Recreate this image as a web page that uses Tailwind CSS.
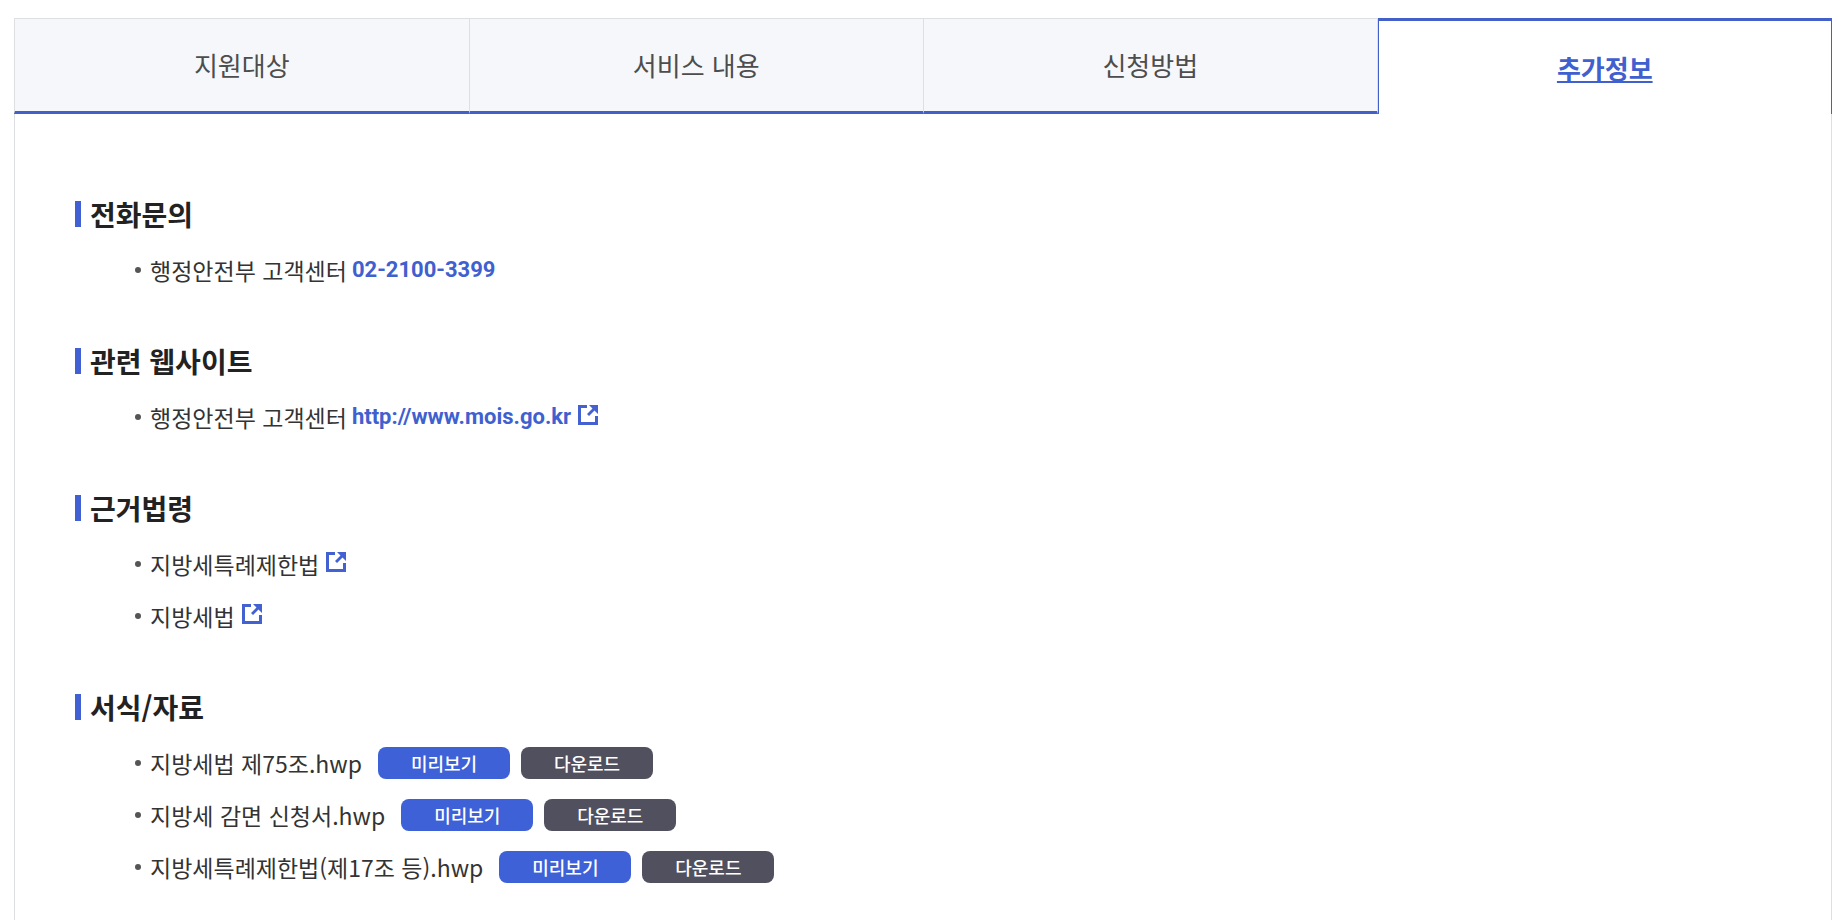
<!DOCTYPE html>
<html lang="ko">
<head>
<meta charset="utf-8">
<meta name="viewport" content="width=device-width, initial-scale=1">
<title>추가정보</title>
<script src="https://cdn.jsdelivr.net/npm/@tailwindcss/browser@4"></script>
</head>
<body class="bg-white font-['Noto_Sans_CJK_KR',sans-serif] text-[#333]">
<svg class="hidden" aria-hidden="true">
  <symbol id="external" viewBox="0 0 20 20">
    <path d="M9 1.500H1.500v17h17V11" fill="none" stroke="#4361d0" stroke-width="3"/>
    <path d="M11 0h9v9l-3.500-3.500L11 11 9 9l5.500-5.500z" fill="#4361d0"/>
  </symbol>
</svg>
<main class="mx-[14px] mt-[18px] flex min-h-[calc(100vh-18px)] flex-col">
  <div role="tablist" class="grid h-24 grid-cols-4 text-[26px] leading-[38px] text-[#4d4d4d]">
    <button role="tab" aria-selected="false" class="border-t border-l border-b-3 border-[#dddfe3] border-b-[#4360c8] bg-[#f5f7fb]">지원대상</button>
    <button role="tab" aria-selected="false" class="border-t border-l border-b-3 border-[#dddfe3] border-b-[#4360c8] bg-[#f5f7fb]">서비스 내용</button>
    <button role="tab" aria-selected="false" class="border-x border-t border-b-3 border-[#dddfe3] border-b-[#4360c8] bg-[#f5f7fb]">신청방법</button>
    <button role="tab" aria-selected="true" aria-controls="panel" class="border-x border-t-3 border-[#4360c8] font-bold text-[#4060d0] underline decoration-2 underline-offset-2">추가정보</button>
  </div>
  <div id="panel" role="tabpanel" class="flex grow flex-col gap-[45px] border-x border-[#dddfe3] px-[60px] pt-20 text-[23px] leading-[34px]">
    <section>
      <h2 class="mb-[10px] flex h-10 items-center gap-[9px] text-[28px] font-bold text-[#222]"><span class="h-[26px] w-[6px] bg-[#4060d4]"></span>전화문의</h2>
      <ul class="pl-[60px]">
        <li class="flex h-[52px] items-center"><span class="mr-[9px] size-[6px] rounded-full bg-[#555]"></span>행정안전부 고객센터<a href="tel:02-2100-3399" class="ml-[5px] font-[Roboto,sans-serif] text-[22px] font-bold text-[#4060d0]">02-2100-3399</a></li>
      </ul>
    </section>
    <section>
      <h2 class="mb-[10px] flex h-10 items-center gap-[9px] text-[28px] font-bold text-[#222]"><span class="h-[26px] w-[6px] bg-[#4060d4]"></span>관련 웹사이트</h2>
      <ul class="pl-[60px]">
        <li class="flex h-[52px] items-center"><span class="mr-[9px] size-[6px] rounded-full bg-[#555]"></span>행정안전부 고객센터<a href="http://www.mois.go.kr" class="ml-[5px] flex items-center gap-[7px] font-[Roboto,sans-serif] text-[22px] font-bold text-[#4060d0]">http://www.mois.go.kr<svg class="mb-1 size-5" aria-hidden="true"><use href="#external"/></svg></a></li>
      </ul>
    </section>
    <section>
      <h2 class="mb-[10px] flex h-10 items-center gap-[9px] text-[28px] font-bold text-[#222]"><span class="h-[26px] w-[6px] bg-[#4060d4]"></span>근거법령</h2>
      <ul class="pl-[60px]">
        <li class="flex h-[52px] items-center"><span class="mr-[9px] size-[6px] rounded-full bg-[#555]"></span><a href="#" class="flex items-center gap-[7px]">지방세특례제한법<svg class="mb-1 size-5" aria-hidden="true"><use href="#external"/></svg></a></li>
        <li class="flex h-[52px] items-center"><span class="mr-[9px] size-[6px] rounded-full bg-[#555]"></span><a href="#" class="flex items-center gap-[7px]">지방세법<svg class="mb-1 size-5" aria-hidden="true"><use href="#external"/></svg></a></li>
      </ul>
    </section>
    <section>
      <h2 class="mb-[10px] flex h-10 items-center gap-[9px] text-[28px] font-bold text-[#222]"><span class="h-[26px] w-[6px] bg-[#4060d4]"></span>서식/자료</h2>
      <ul class="pl-[60px]">
        <li class="flex h-[52px] items-center"><span class="mr-[9px] size-[6px] rounded-full bg-[#555]"></span>지방세법 제75조.hwp<button class="ml-4 h-8 w-[132px] rounded-lg bg-[#3e61d7] text-[18px] leading-[26px] font-medium text-white">미리보기</button><button class="ml-[11px] h-8 w-[132px] rounded-lg bg-[#50505e] text-[18px] leading-[26px] font-medium text-white">다운로드</button></li>
        <li class="flex h-[52px] items-center"><span class="mr-[9px] size-[6px] rounded-full bg-[#555]"></span>지방세 감면 신청서.hwp<button class="ml-4 h-8 w-[132px] rounded-lg bg-[#3e61d7] text-[18px] leading-[26px] font-medium text-white">미리보기</button><button class="ml-[11px] h-8 w-[132px] rounded-lg bg-[#50505e] text-[18px] leading-[26px] font-medium text-white">다운로드</button></li>
        <li class="flex h-[52px] items-center"><span class="mr-[9px] size-[6px] rounded-full bg-[#555]"></span>지방세특례제한법(제17조 등).hwp<button class="ml-4 h-8 w-[132px] rounded-lg bg-[#3e61d7] text-[18px] leading-[26px] font-medium text-white">미리보기</button><button class="ml-[11px] h-8 w-[132px] rounded-lg bg-[#50505e] text-[18px] leading-[26px] font-medium text-white">다운로드</button></li>
      </ul>
    </section>
  </div>
</main>
</body>
</html>
